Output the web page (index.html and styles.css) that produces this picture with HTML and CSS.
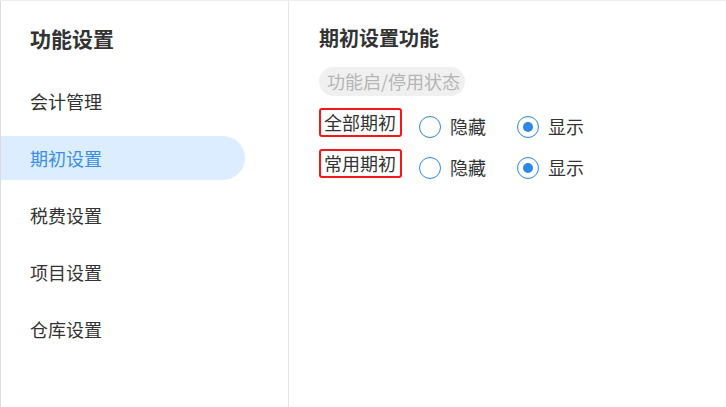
FILE: index.html
```html
<!DOCTYPE html>
<html lang="zh">
<head>
<meta charset="utf-8">
<link rel="stylesheet" href="styles.css">
</head>
<body>
<div class="app">
  <aside class="sidebar">
    <div class="side-title">功能设置</div>
    <ul class="menu">
      <li class="menu-item">会计管理</li>
      <li class="menu-item active">期初设置</li>
      <li class="menu-item">税费设置</li>
      <li class="menu-item">项目设置</li>
      <li class="menu-item">仓库设置</li>
    </ul>
  </aside>
  <main class="panel">
    <div class="panel-title">期初设置功能</div>
    <div class="tag">功能启/停用状态</div>
    <div class="rows">
      <div class="row">
        <span class="label">全部期初</span>
        <span class="option"><span class="radio"></span><span class="opt-text">隐藏</span></span>
        <span class="option"><span class="radio checked"></span><span class="opt-text">显示</span></span>
      </div>
      <div class="row">
        <span class="label">常用期初</span>
        <span class="option"><span class="radio"></span><span class="opt-text">隐藏</span></span>
        <span class="option"><span class="radio checked"></span><span class="opt-text">显示</span></span>
      </div>
    </div>
  </main>
</div>
</body>
</html>
```

FILE: styles.css
```css
html, body {
  margin: 0;
  padding: 0;
  background: #fff;
}
body {
  font-family: "Noto Sans CJK SC", "Noto Sans", sans-serif;
  color: #333;
}
.app {
  display: flex;
  height: 407px;
  box-sizing: border-box;
  border-top: 1px solid #efefef;
}
.sidebar {
  width: 289px;
  box-sizing: border-box;
  border-left: 1px solid #dcdcdc;
  border-right: 1px solid #e6e6e6;
  padding-top: 23px;
}
.side-title {
  padding-left: 29px;
  font-size: 21px;
  font-weight: bold;
  line-height: 28px;
  color: #333;
}
.menu {
  list-style: none;
  margin: 27px 0 0 0;
  padding: 0;
  display: flex;
  flex-direction: column;
  gap: 13px;
}
.menu-item {
  width: 244px;
  height: 44px;
  line-height: 44px;
  padding-left: 29px;
  box-sizing: border-box;
  font-size: 18px;
  color: #333;
  border-radius: 0 22px 22px 0;
}
.menu-item.active {
  background: #dbedfe;
  color: #3a8ee8;
}
.panel {
  flex: 1;
  padding: 23px 0 0 30px;
}
.panel-title {
  font-size: 20px;
  font-weight: bold;
  line-height: 28px;
  color: #333;
}
.tag {
  display: inline-block;
  margin-top: 15px;
  height: 29px;
  line-height: 29px;
  padding: 0 5px 0 8px;
  border-radius: 15px;
  background: #f0f0f0;
  color: #b5b5b5;
  font-size: 18px;
}
.rows {
  margin-top: 12px;
  display: flex;
  flex-direction: column;
  gap: 12px;
}
.row {
  display: flex;
  align-items: flex-start;
  height: 29px;
}
.label {
  box-sizing: border-box;
  height: 29px;
  line-height: 25px;
  border: 2px solid #f5171a;
  border-radius: 3px;
  padding: 0 4px 0 3px;
  font-size: 18px;
  color: #333;
}
.option {
  display: flex;
  align-items: center;
  height: 29px;
  margin-top: 4px;
  margin-left: 31px;
}
.label + .option {
  margin-left: 17px;
}
.radio {
  box-sizing: border-box;
  width: 22px;
  height: 22px;
  border: 1.5px solid #2a88e6;
  border-radius: 50%;
  display: flex;
  align-items: center;
  justify-content: center;
}
.radio.checked::after {
  content: "";
  width: 10px;
  height: 10px;
  border-radius: 50%;
  background: #2a88e6;
}
.opt-text {
  margin-left: 9px;
  font-size: 18px;
  line-height: 29px;
  color: #333;
}
```
